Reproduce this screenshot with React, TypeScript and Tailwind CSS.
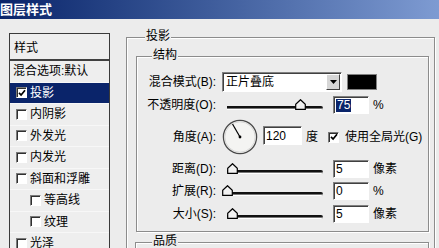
import React from "react";

const FONT = "font-['Liberation_Sans','Noto_Sans_CJK_SC',sans-serif]";

function Check({ checked }: { checked?: boolean }) {
  return (
    <span className="flex h-[11px] w-[11px] shrink-0 items-center justify-center border border-b-white border-l-[#7a7a7a] border-r-white border-t-[#7a7a7a] bg-white shadow-[inset_1px_1px_0_#303030]">
      {checked && (
        <svg width="8" height="8" viewBox="0 0 8 8">
          <polyline points="1,3.8 3.1,6 7,1.3" fill="none" stroke="#000" strokeWidth="1.7" />
        </svg>
      )}
    </span>
  );
}

function ListRow({ label, checked, selected, indent, noCheck }: { label: string; checked?: boolean; selected?: boolean; indent?: boolean; noCheck?: boolean }) {
  return (
    <div
      className={`flex h-[21.5px] items-center border-b border-b-[#f7f7f7] ${selected ? "bg-[#0a246a] text-white" : ""} ${noCheck ? "pl-[3px]" : indent ? "pl-[20px]" : "pl-[6px]"}`}
    >
      {!noCheck && <Check checked={checked} />}
      <span className={`leading-none ${noCheck ? "" : "ml-[3px]"}`}>{label}</span>
    </div>
  );
}

function Sunken({ w, h, children }: { w: string; h: string; children?: React.ReactNode }) {
  return (
    <div className={`flex items-center border border-b-white border-l-[#808080] border-r-white border-t-[#808080] bg-white pl-[2px] shadow-[inset_1px_1px_0_#404040] ${w} ${h}`}>
      {children}
    </div>
  );
}

function Slider({ pos }: { pos: number }) {
  return (
    <div className="relative ml-[5px] h-[18px] w-[106px] shrink-0">
      <div className="absolute left-[5px] top-[10px] h-[4px] w-[96px] rounded-r-[2px] border-b border-b-white bg-[#111] shadow-[inset_0_-1px_0_#777]" />
      <svg className="absolute top-[3px]" style={{ left: pos }} width="11" height="11" viewBox="0 0 11 11">
        <polygon points="5.5,0.7 10.3,5.2 10.3,10.3 0.7,10.3 0.7,5.2" fill="#f2f2f2" stroke="#000" strokeWidth="1.2" />
      </svg>
    </div>
  );
}

function Label({ children }: { children: React.ReactNode }) {
  return <div className="w-[80px] shrink-0 pr-[1px] text-right leading-none">{children}</div>;
}

function SliderRow({ label, pos, value, unit, mt }: { label: string; pos: number; value: string; unit: string; mt: string }) {
  return (
    <div className={`flex h-[18px] items-center ${mt}`}>
      <Label>{label}</Label>
      <Slider pos={pos} />
      <div className="ml-[5px]">
        <Sunken w="w-[36px]" h="h-[18px]">
          <span className="leading-none">{value}</span>
        </Sunken>
      </div>
      <span className="ml-[4px] leading-none">{unit}</span>
    </div>
  );
}

export default function App() {
  return (
    <div className={`h-[248px] w-[439px] overflow-hidden bg-[#ececec] text-[12px] text-black ${FONT}`}>
      <div className="h-[19px] bg-gradient-to-r from-[#0a246a] to-[#7e9bd2] text-[13px] font-bold leading-[19px] text-white">
        图层样式
      </div>
      <div className="flex">
        {/* left style list */}
        <div className="ml-[9px] mt-[14px] h-[300px] w-[101px] shrink-0 border border-[#3a3a3a] bg-[#eeeeee]">
          <div className="flex h-[27px] items-center border-b-2 border-b-[#404040] pl-[4px] pt-[2px] leading-none">样式</div>
          <ListRow label="混合选项:默认" noCheck />
          <ListRow label="投影" checked selected />
          <ListRow label="内阴影" />
          <ListRow label="外发光" />
          <ListRow label="内发光" />
          <ListRow label="斜面和浮雕" />
          <ListRow label="等高线" indent />
          <ListRow label="纹理" indent />
          <ListRow label="光泽" />
        </div>

        {/* outer group 投影 */}
        <div className="relative ml-[16px] mt-[18px] h-[300px] w-[309px] shrink-0 border border-[#8c8c8c] shadow-[inset_1px_1px_0_#fff,1px_1px_0_#fff]">
          <span className="absolute left-[18px] top-[-8px] bg-[#ececec] px-[1px] leading-none">投影</span>

          {/* inner group 结构 */}
          <div className="relative ml-[9px] mt-[18px] h-[176px] w-[293px] border border-[#8c8c8c] pt-[15px] shadow-[inset_1px_1px_0_#fff,1px_1px_0_#fff]">
            <span className="absolute left-[15px] top-[-8px] bg-[#ececec] px-[1px] leading-none">结构</span>

            <div className="flex h-[20px] items-center">
              <Label>混合模式(B):</Label>
              <div className="ml-[5px] flex h-[20px] w-[120px] items-center justify-between border border-b-white border-l-[#808080] border-r-white border-t-[#808080] bg-white pl-[3px] pr-[1px] shadow-[inset_1px_1px_0_#404040]">
                <span className="leading-none">正片叠底</span>
                <div className="flex h-[16px] w-[14px] items-center justify-center border border-b-[#404040] border-l-white border-r-[#404040] border-t-white bg-[#d6d6d6]">
                  <svg width="7" height="4" viewBox="0 0 7 4">
                    <polygon points="0,0 7,0 3.5,4" fill="#000" />
                  </svg>
                </div>
              </div>
              <div className="ml-[5px] h-[16px] w-[30px] border border-[#808080] bg-black" />
            </div>

            <div className="mt-[4px] flex h-[18px] items-center">
              <Label>不透明度(O):</Label>
              <Slider pos={73} />
              <div className="ml-[5px]">
                <Sunken w="w-[36px]" h="h-[18px]">
                  <span className="bg-[#0a246a] px-[1px] leading-[13px] text-white">75</span>
                </Sunken>
              </div>
              <span className="ml-[4px] leading-none">%</span>
            </div>

            <div className="mt-[5px] flex h-[36px] items-center">
              <Label>角度(A):</Label>
              <svg className="ml-[5px] shrink-0" width="36" height="36" viewBox="0 0 36 36">
                <circle cx="18" cy="18" r="16.6" fill="#f4f4f2" stroke="#4a4a4a" strokeWidth="1.3" />
                <circle cx="18" cy="18" r="15.2" fill="none" stroke="#d0d0d0" strokeWidth="0.8" />
                <line x1="18" y1="18" x2="10.5" y2="5" stroke="#000" strokeWidth="1.2" />
                <circle cx="18" cy="18" r="1.4" fill="#000" />
              </svg>
              <div className="mb-[3px] ml-[5px]">
                <Sunken w="w-[39px]" h="h-[19px]">
                  <span className="leading-none">120</span>
                </Sunken>
              </div>
              <span className="ml-[4px] leading-none">度</span>
              <div className="ml-[10px]">
                <Check checked />
              </div>
              <span className="ml-[6px] leading-none">使用全局光(G)</span>
            </div>

            <SliderRow label="距离(D):" pos={5} value="5" unit="像素" mt="mt-[5px]" />
            <SliderRow label="扩展(R):" pos={0} value="0" unit="%" mt="mt-[4px]" />
            <SliderRow label="大小(S):" pos={5} value="5" unit="像素" mt="mt-[5px]" />
          </div>

          {/* group 品质 */}
          <div className="relative ml-[8px] mt-[10px] h-[60px] w-[294px] border border-[#8c8c8c] shadow-[inset_1px_1px_0_#fff,1px_1px_0_#fff]">
            <span className="absolute left-[16px] top-[-8px] bg-[#ececec] px-[1px] leading-none">品质</span>
          </div>
        </div>
      </div>
    </div>
  );
}
